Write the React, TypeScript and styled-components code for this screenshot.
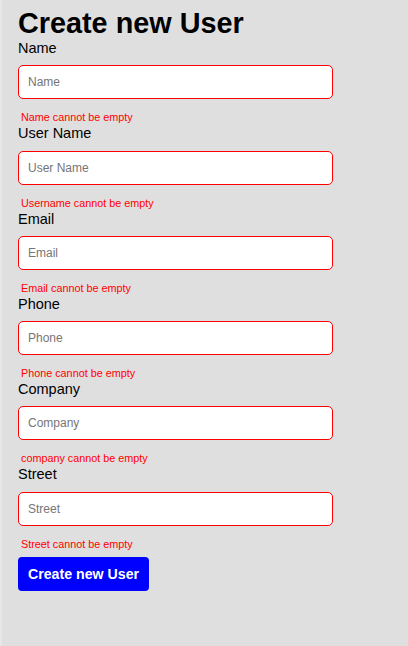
import styled, { createGlobalStyle } from "styled-components";

const fields = [
  { label: "Name", placeholder: "Name", error: "Name cannot be empty" },
  { label: "User Name", placeholder: "User Name", error: "Username cannot be empty" },
  { label: "Email", placeholder: "Email", error: "Email cannot be empty" },
  { label: "Phone", placeholder: "Phone", error: "Phone cannot be empty" },
  { label: "Company", placeholder: "Company", error: "company cannot be empty" },
  { label: "Street", placeholder: "Street", error: "Street cannot be empty" },
];

export default function App() {
  return (
    <>
      <GlobalStyle />
      <Page>
        <Title>Create new User</Title>
        <Form onSubmit={(e) => e.preventDefault()}>
          {fields.map((f) => (
            <Field key={f.label}>
              <Label>{f.label}</Label>
              <Input placeholder={f.placeholder} />
              <ErrorText>{f.error}</ErrorText>
            </Field>
          ))}
          <SubmitButton type="submit">Create new User</SubmitButton>
        </Form>
      </Page>
    </>
  );
}

const GlobalStyle = createGlobalStyle`
  html, body {
    margin: 0;
    padding: 0;
    background: #dfdfdf;
    font-family: "Liberation Sans", Arial, sans-serif;
  }
`;

const Page = styled.div`
  min-height: 646px;
  box-sizing: border-box;
  padding: 7px 0 0 16px;
  border-left: 2px solid #e7e7e7;
`;

const Title = styled.h1`
  margin: 0;
  font-size: 28.8px;
  font-weight: 700;
  line-height: 33px;
  color: #000;
`;

const Form = styled.form`
  display: flex;
  flex-direction: column;
  align-items: flex-start;
`;

const Field = styled.div`
  display: flex;
  flex-direction: column;
`;

const Label = styled.label`
  font-size: 14.5px;
  line-height: 17.3px;
  color: #000;
`;

const Input = styled.input`
  box-sizing: border-box;
  width: 315px;
  height: 34px;
  margin-top: 8px;
  padding: 0 9px;
  border: 1px solid #ff0000;
  border-radius: 5px;
  background: #fff;
  font-family: "Liberation Sans", Arial, sans-serif;
  font-size: 12px;
  outline: none;

  &::placeholder {
    color: #767676;
  }
`;

const ErrorText = styled.span`
  margin: 12px 0 2px 3px;
  font-size: 10.8px;
  line-height: 12px;
  color: #ff0000;
`;

const SubmitButton = styled.button`
  margin-top: 5px;
  width: 131px;
  height: 34px;
  padding: 0;
  border: none;
  border-radius: 4px;
  background: #0000ff;
  color: #fff;
  font-family: "Liberation Sans", Arial, sans-serif;
  font-size: 14.2px;
  font-weight: 700;
  cursor: pointer;
`;
